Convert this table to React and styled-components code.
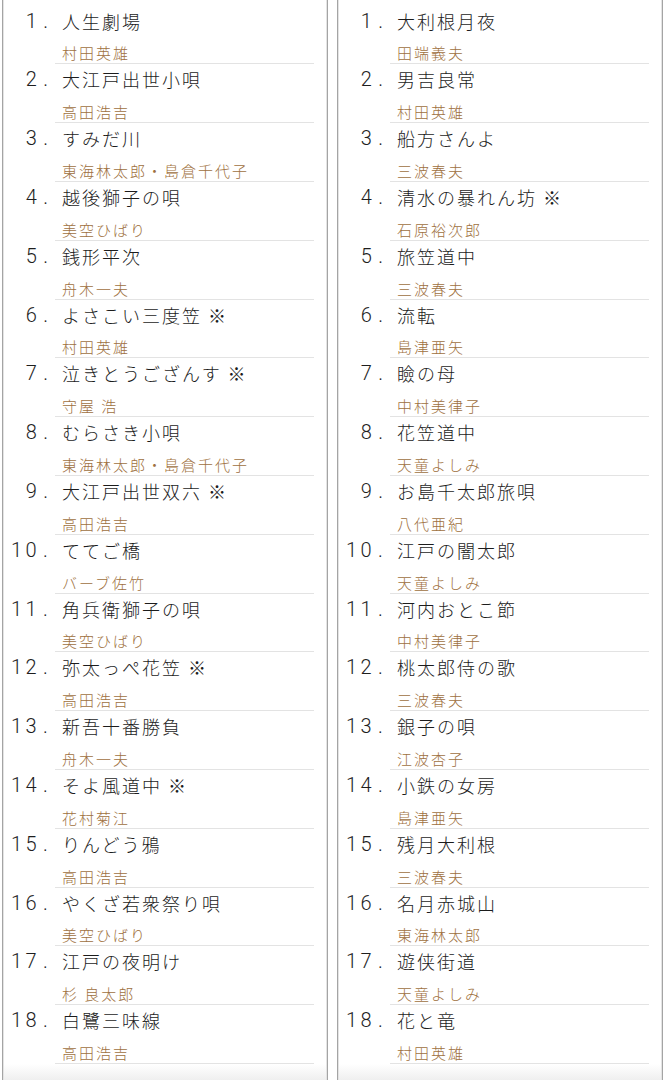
import React from "react";
import styled, { createGlobalStyle } from "styled-components";

const GlobalStyle = createGlobalStyle`
  html, body {
    margin: 0;
    padding: 0;
    background: #ffffff;
  }
  body {
    font-family: "Noto Sans CJK JP", "Noto Sans", sans-serif;
    color: #222;
  }
`;

const left = [
  ["人生劇場", "村田英雄"],
  ["大江戸出世小唄", "高田浩吉"],
  ["すみだ川", "東海林太郎・島倉千代子"],
  ["越後獅子の唄", "美空ひばり"],
  ["銭形平次", "舟木一夫"],
  ["よさこい三度笠 ※", "村田英雄"],
  ["泣きとうござんす ※", "守屋 浩"],
  ["むらさき小唄", "東海林太郎・島倉千代子"],
  ["大江戸出世双六 ※", "高田浩吉"],
  ["ててご橋", "バーブ佐竹"],
  ["角兵衛獅子の唄", "美空ひばり"],
  ["弥太っぺ花笠 ※", "高田浩吉"],
  ["新吾十番勝負", "舟木一夫"],
  ["そよ風道中 ※", "花村菊江"],
  ["りんどう鴉", "高田浩吉"],
  ["やくざ若衆祭り唄", "美空ひばり"],
  ["江戸の夜明け", "杉 良太郎"],
  ["白鷺三味線", "高田浩吉"],
];

const right = [
  ["大利根月夜", "田端義夫"],
  ["男吉良常", "村田英雄"],
  ["船方さんよ", "三波春夫"],
  ["清水の暴れん坊 ※", "石原裕次郎"],
  ["旅笠道中", "三波春夫"],
  ["流転", "島津亜矢"],
  ["瞼の母", "中村美律子"],
  ["花笠道中", "天童よしみ"],
  ["お島千太郎旅唄", "八代亜紀"],
  ["江戸の闇太郎", "天童よしみ"],
  ["河内おとこ節", "中村美律子"],
  ["桃太郎侍の歌", "三波春夫"],
  ["銀子の唄", "江波杏子"],
  ["小鉄の女房", "島津亜矢"],
  ["残月大利根", "三波春夫"],
  ["名月赤城山", "東海林太郎"],
  ["遊侠街道", "天童よしみ"],
  ["花と竜", "村田英雄"],
];

const Page = styled.div`
  display: flex;
  gap: 9px;
  padding-left: 2px;
  height: 1080px;
  overflow: hidden;
`;

const Panel = styled.ol`
  list-style: none;
  margin: 0;
  width: 324px;
  padding: 5.6px 0 0 0;
  border-left: 1px solid #a4a4a4;
  border-right: 1px solid #a4a4a4;
  box-shadow: inset 1px 0 0 #e4e4e4, inset -1px 0 0 #e4e4e4;
  background: linear-gradient(to bottom, #fff 0, #fff 1064px, #efefef 1080px);
`;

const Item = styled.li`
  display: flex;
  align-items: flex-start;
`;

const Num = styled.span`
  flex: 0 0 52px;
  box-sizing: border-box;
  padding-left: 8px;
  font-family: Roboto, "Liberation Sans", sans-serif;
  font-weight: 300;
  font-size: 20px;
  letter-spacing: 3.4px;
  line-height: 30.8px;
  color: #1e1e1e;
  white-space: pre;
`;

const Dot = styled.span`
  margin-left: 3px;
`;

const Body = styled.div`
  width: 259px;
  padding-left: 7px;
  box-sizing: border-box;
  border-bottom: 1px solid #e3e3e3;
`;

const Title = styled.div`
  font-size: 18px;
  font-weight: 300;
  letter-spacing: 2px;
  line-height: 30.8px;
  color: #1c1c1c;
  white-space: nowrap;
`;

const Artist = styled.div`
  font-size: 15px;
  font-weight: 300;
  letter-spacing: 2px;
  line-height: 20px;
  padding-top: 7px;
  color: #9e7040;
  white-space: nowrap;
`;

function List({ items }) {
  return (
    <Panel>
      {items.map(([title, artist], i) => (
        <Item key={i}>
          <Num>
            {String(i + 1).padStart(2, "\u2007")}
            <Dot>.</Dot>
          </Num>
          <Body>
            <Title>{title}</Title>
            <Artist>{artist}</Artist>
          </Body>
        </Item>
      ))}
    </Panel>
  );
}

export default function App() {
  return (
    <>
      <GlobalStyle />
      <Page>
        <List items={left} />
        <List items={right} />
      </Page>
    </>
  );
}
